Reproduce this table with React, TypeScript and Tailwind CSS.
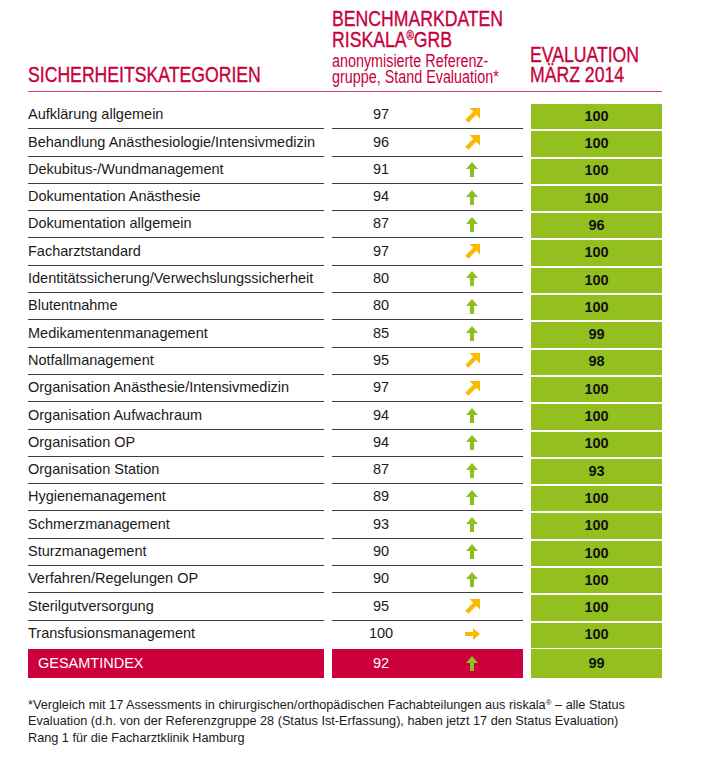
import React from 'react';

type Trend = 'diag' | 'up' | 'right';

const rows: { label: string; bench: string; trend: Trend; score: string }[] = [
  { label: 'Aufklärung allgemein', bench: '97', trend: 'diag', score: '100' },
  { label: 'Behandlung Anästhesiologie/Intensivmedizin', bench: '96', trend: 'diag', score: '100' },
  { label: 'Dekubitus-/Wundmanagement', bench: '91', trend: 'up', score: '100' },
  { label: 'Dokumentation Anästhesie', bench: '94', trend: 'up', score: '100' },
  { label: 'Dokumentation allgemein', bench: '87', trend: 'up', score: '96' },
  { label: 'Facharztstandard', bench: '97', trend: 'diag', score: '100' },
  { label: 'Identitätssicherung/Verwechslungssicherheit', bench: '80', trend: 'up', score: '100' },
  { label: 'Blutentnahme', bench: '80', trend: 'up', score: '100' },
  { label: 'Medikamentenmanagement', bench: '85', trend: 'up', score: '99' },
  { label: 'Notfallmanagement', bench: '95', trend: 'diag', score: '98' },
  { label: 'Organisation Anästhesie/Intensivmedizin', bench: '97', trend: 'diag', score: '100' },
  { label: 'Organisation Aufwachraum', bench: '94', trend: 'up', score: '100' },
  { label: 'Organisation OP', bench: '94', trend: 'up', score: '100' },
  { label: 'Organisation Station', bench: '87', trend: 'up', score: '93' },
  { label: 'Hygienemanagement', bench: '89', trend: 'up', score: '100' },
  { label: 'Schmerzmanagement', bench: '93', trend: 'up', score: '100' },
  { label: 'Sturzmanagement', bench: '90', trend: 'up', score: '100' },
  { label: 'Verfahren/Regelungen OP', bench: '90', trend: 'up', score: '100' },
  { label: 'Sterilgutversorgung', bench: '95', trend: 'diag', score: '100' },
  { label: 'Transfusionsmanagement', bench: '100', trend: 'right', score: '100' },
];

// Pfeile für die Tendenz
function Arrow({ trend }: { trend: Trend }) {
  if (trend === 'diag') {
    return (
      <svg width="15" height="15" viewBox="0 0 15 15" className="block">
        <polygon points="4.5,0 15,0 15,10.5" fill="#fbb900" />
        <line x1="1.8" y1="13.2" x2="10.5" y2="4.5" stroke="#fbb900" strokeWidth="4.4" />
      </svg>
    );
  }
  if (trend === 'right') {
    return (
      <svg width="15" height="12" viewBox="0 0 15 12" className="block">
        <polygon points="15,6 8,0 8,4 0,4 0,8 8,8 8,12" fill="#fbb900" />
      </svg>
    );
  }
  return (
    <svg width="12" height="15" viewBox="0 0 12 15" className="block">
      <polygon points="6,0 12,7 8,7 8,15 4,15 4,7 0,7" fill="#8cbf1f" />
    </svg>
  );
}

// schmale Titelzeile (Condensed-Schrift nachgebildet)
function Cond({ children, className = '' }: { children: React.ReactNode; className?: string }) {
  return (
    <div
      className={`whitespace-nowrap origin-left scale-x-[0.82] [-webkit-text-stroke:0.35px_#c8003c] ${className}`}
    >
      {children}
    </div>
  );
}

export default function App() {
  return (
    <div
      className="w-[702px] h-[764px] bg-white pl-[28px] pt-[9px] text-[#1a1a1a]"
      style={{ fontFamily: '"Liberation Sans", Arial, sans-serif' }}
    >
      {/* Kopfzeile */}
      <div className="flex items-end w-[634px] border-b border-[#d4446a] pb-[6px] text-[#c8003c]">
        <div className="w-[296px]">
          <Cond className="text-[21.5px] leading-[20px]">SICHERHEITSKATEGORIEN</Cond>
        </div>
        <div className="w-[191px] ml-[8px]">
          <Cond className="text-[21.5px] leading-[21px]">BENCHMARKDATEN</Cond>
          <Cond className="text-[21.5px] leading-[21px]">
            RISKALA<span className="relative -top-[7px] text-[12px]">®</span>GRB
          </Cond>
          <Cond className="text-[17.5px] leading-[15.5px] [-webkit-text-stroke:0px]">anonymisierte Referenz-</Cond>
          <Cond className="text-[17.5px] leading-[15.5px] [-webkit-text-stroke:0px]">gruppe, Stand Evaluation*</Cond>
        </div>
        <div className="w-[131px] ml-[7px]">
          <Cond className="text-[21.5px] leading-[20px]">EVALUATION</Cond>
          <Cond className="text-[21.5px] leading-[20px]">MÄRZ 2014</Cond>
        </div>
      </div>

      {/* Tabelle */}
      <div className="pt-[10px] text-[14.5px]">
        {rows.map((r, i) => {
          const last = i === rows.length - 1;
          return (
            <div key={r.label} className="flex h-[27.3px]">
              <div className={`w-[296px] flex items-center ${last ? '' : 'border-b border-[#3c3c3c]'}`}>
                {r.label}
              </div>
              <div className={`w-[191px] ml-[8px] flex items-center ${last ? '' : 'border-b border-[#3c3c3c]'}`}>
                <span className="w-[98px] text-center">{r.bench}</span>
                <span className="w-[84px] flex justify-center">
                  <Arrow trend={r.trend} />
                </span>
              </div>
              <div className="w-[131px] ml-[8px] pt-[2px]">
                <div className="h-full bg-[#93c01f] flex items-center justify-center font-bold text-[#111]">
                  {r.score}
                </div>
              </div>
            </div>
          );
        })}

        {/* Gesamtindex */}
        <div className="flex h-[29px] mt-[1px] text-white">
          <div className="w-[296px] bg-[#cc003d] flex items-center pl-[10px]">GESAMTINDEX</div>
          <div className="w-[191px] ml-[8px] bg-[#cc003d] flex items-center">
            <span className="w-[98px] text-center">92</span>
            <span className="w-[84px] flex justify-center">
              <Arrow trend="up" />
            </span>
          </div>
          <div className="w-[131px] ml-[8px] bg-[#93c01f] flex items-center justify-center font-bold text-[#111]">
            99
          </div>
        </div>
      </div>

      {/* Fußnote */}
      <p className="mt-[19px] text-[12.7px] leading-[16.5px] text-[#1a1a1a]">
        *Vergleich mit 17 Assessments in chirurgischen/orthopädischen Fachabteilungen aus riskala
        <span className="relative -top-[4px] text-[8px] leading-none">®</span> – alle Status
        <br />
        Evaluation (d.h. von der Referenzgruppe 28 (Status Ist-Erfassung), haben jetzt 17 den Status Evaluation)
        <br />
        Rang 1 für die Facharztklinik Hamburg
      </p>
    </div>
  );
}
